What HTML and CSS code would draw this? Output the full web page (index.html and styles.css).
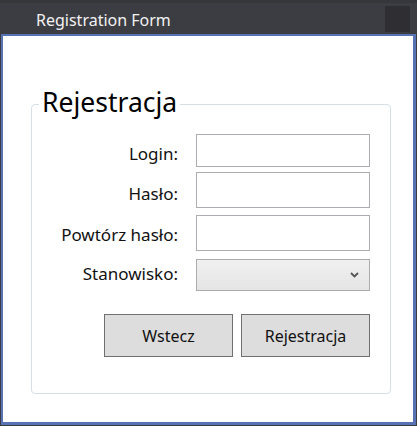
FILE: index.html
```html
<!DOCTYPE html>
<html lang="pl">
<head>
<meta charset="utf-8">
<title>Registration Form</title>
<link rel="stylesheet" href="styles.css">
</head>
<body>
<div class="titlebar">
  <span class="title">Registration Form</span>
  <span class="close-box"></span>
</div>
<div class="client">
  <fieldset class="group">
    <legend class="group-title">Rejestracja</legend>
    <div class="form">
      <label class="label label-login" for="login">Login:</label>
      <input class="field field-login" id="login" type="text">
      <label class="label label-pass" for="pass">Hasło:</label>
      <input class="field field-pass" id="pass" type="password">
      <label class="label label-repeat" for="repeat">Powtórz hasło:</label>
      <input class="field field-repeat" id="repeat" type="password">
      <label class="label label-role" for="role">Stanowisko:</label>
      <div class="select" id="role">
        <svg class="chevron" width="9" height="6" viewBox="0 0 9 6"><path d="M1 1 L4.5 4.5 L8 1" fill="none" stroke="#555" stroke-width="1.8"/></svg>
      </div>
    </div>
    <div class="buttons">
      <button class="btn" type="button">Wstecz</button>
      <button class="btn" type="button">Rejestracja</button>
    </div>
  </fieldset>
</div>
</body>
</html>
```
FILE: styles.css
```css
html, body {
  margin: 0;
  padding: 0;
}
body {
  width: 417px;
  height: 426px;
  background: #3c3d42;
  font-family: "Noto Sans", "Open Sans", sans-serif;
  overflow: hidden;
}
.titlebar {
  height: 34px;
  box-sizing: border-box;
  border-top: 3px solid #36373b;
  display: flex;
  align-items: flex-start;
}
.title {
  margin: 7px 0 0 36px;
  color: #f2f2f2;
  font-size: 16px;
  line-height: 20px;
}
.close-box {
  margin: 3px 7px 0 auto;
  width: 25px;
  height: 26px;
  background: #2e2e33;
}
.client {
  margin: 0 1px 1px 1px;
  height: 391px;
  box-sizing: border-box;
  background: #ffffff;
  border-style: solid;
  border-color: #5873b3;
  border-width: 2px 3px 3px 2px;
  display: flow-root;
}
.group {
  margin: 51px 22px 0 28px;
  padding: 0 20px 36px 0;
  border: 1px solid #d5dfe5;
  border-radius: 4px;
  min-width: 0;
}
.group-title {
  margin-left: 7px;
  padding: 0 3px 4px;
  font-size: 26.5px;
  line-height: 30px;
  color: #000;
}
.form {
  margin-top: 13px;
  display: grid;
  grid-template-columns: 1fr 174px;
  column-gap: 18px;
}
.label {
  text-align: right;
  font-size: 17px;
  line-height: 20px;
  color: #111;
  align-self: center;
}
.field {
  box-sizing: border-box;
  margin: 0;
  padding: 0;
  width: 174px;
  border: 1px solid #abadb3;
  background: #fff;
  outline: none;
}
.field-login { height: 33px; }
.field-pass { height: 36px; margin-top: 5px; }
.field-repeat { height: 36px; margin-top: 7px; }
.label-login { padding-top: 7px; }
.label-pass { padding-top: 13px; }
.label-repeat { padding-top: 11px; }
.label-role { padding-top: 5px; }
.select {
  box-sizing: border-box;
  margin-top: 8px;
  height: 32px;
  border: 1px solid #acacac;
  background: linear-gradient(#f0f0f0, #e5e5e5);
  display: flex;
  align-items: center;
  justify-content: flex-end;
  padding-right: 10px;
}
.buttons {
  margin-top: 23px;
  display: flex;
  justify-content: flex-end;
  gap: 8px;
}
.btn {
  box-sizing: border-box;
  width: 129px;
  height: 43px;
  margin: 0;
  border: 1px solid #707070;
  border-radius: 0;
  background: #dddddd;
  font-family: "Noto Sans", "Open Sans", sans-serif;
  font-size: 16px;
  color: #111;
  padding: 0;
}
```
